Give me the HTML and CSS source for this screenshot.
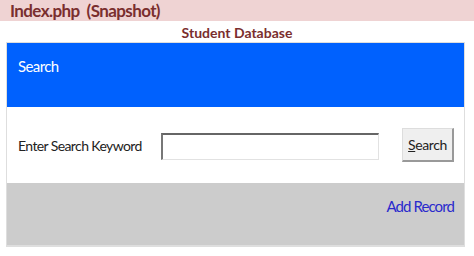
FILE: index.html
```html
<!DOCTYPE html>
<html lang="en">

<head>
  <meta charset="UTF-8">
  <title>Index.php (Snapshot)</title>
  <link rel="stylesheet" href="styles.css">
</head>

<body>
  <div class="snapshot-bar">Index.php &nbsp;(Snapshot)</div>
  <div class="page-title">Student Database</div>

  <div class="panel">
    <div class="panel-head">Search</div>
    <div class="panel-body">
      <label for="keyword">Enter Search Keyword</label>
      <input type="text" id="keyword">
      <button type="submit"><u>S</u>earch</button>
    </div>
    <div class="panel-foot">
      <a href="#">Add Record</a>
    </div>
  </div>
</body>

</html>
```

FILE: styles.css
```css
body {
  margin: 0;
  font-family: Lato, "Open Sans", sans-serif;
  background: #fff;
}

.snapshot-bar {
  height: 21px;
  line-height: 21px;
  padding-left: 10px;
  background-color: #efd3d3;
  color: #7a2e2e;
  font-size: 17px;
  font-weight: bold;
  letter-spacing: -0.6px;
}

.page-title {
  text-align: center;
  color: #7a2e2e;
  font-size: 14px;
  font-weight: bold;
  height: 21px;
  line-height: 24px;
}

.panel {
  margin-left: 6px;
  width: 457px;
  border: 1px solid #dedede;
  border-bottom-width: 2px;
}

.panel-head {
  height: 64px;
  line-height: 46px;
  padding-left: 11px;
  background-color: #0061fe;
  color: #fff;
  font-size: 15px;
  letter-spacing: -0.6px;
}

.panel-body {
  display: flex;
  align-items: center;
  height: 76px;
  padding-left: 11px;
  font-size: 14px;
  color: #222;
}

.panel-body label {
  width: 143px;
  letter-spacing: -0.6px;
}

.panel-body input[type="text"] {
  width: 215px;
  height: 24px;
  margin: 3px 0 0 0;
  padding: 0;
  border: 1px solid #e2e2e2;
  border-top: 2px solid #666;
  border-left: 2px solid #777;
}

.panel-body button {
  margin-left: 23px;
  width: 52px;
  height: 34px;
  padding: 0;
  font-family: Lato, "Open Sans", sans-serif;
  font-size: 14px;
  letter-spacing: -0.4px;
  color: #222;
  background-color: #efefef;
  border: 1px solid #ddd;
  border-right: 2px solid #999;
  border-bottom: 2px solid #999;
}

.panel-foot {
  height: 62px;
  line-height: 46px;
  padding-right: 10px;
  text-align: right;
  background-color: #cccccc;
}

.panel-foot a {
  color: #2a2acc;
  text-decoration: none;
  font-size: 15px;
  letter-spacing: -0.9px;
}
```
